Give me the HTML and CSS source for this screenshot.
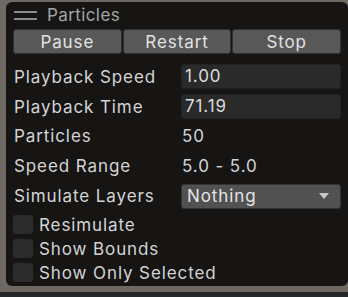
FILE: index.html
```html
<!DOCTYPE html>
<html lang="en">
<head>
    <meta charset="UTF-8">
    <title>Particles</title>
    <link rel="stylesheet" href="styles.css">
</head>
<body>
    <div class="panel">
        <div class="header">
            <span class="grip"></span>
            <span class="title">Particles</span>
        </div>
        <div class="buttons">
            <button>Pause</button>
            <button>Restart</button>
            <button>Stop</button>
        </div>

        <div class="row">
            <span class="label">Playback Speed</span>
            <div class="field">1.00</div>
        </div>
        <div class="row">
            <span class="label">Playback Time</span>
            <div class="field">71.19</div>
        </div>
        <div class="row">
            <span class="label">Particles</span>
            <span class="value">50</span>
        </div>
        <div class="row">
            <span class="label">Speed Range</span>
            <span class="value">5.0 - 5.0</span>
        </div>
        <div class="row">
            <span class="label">Simulate Layers</span>
            <div class="dropdown">Nothing <span class="arrow"></span></div>
        </div>

        <div class="checks">
            <label class="check"><span class="box"></span>Resimulate</label>
            <label class="check"><span class="box"></span>Show Bounds</label>
            <label class="check"><span class="box"></span>Show Only Selected</label>
        </div>
    </div>
    <div class="footer"></div>
</body>
</html>
```

FILE: styles.css
```css
body {
    margin: 0;
    background-color: #6f6964;
    font-family: 'Inter', sans-serif;
    font-size: 17px;
    letter-spacing: 0.9px;
    color: #d4d4d4;
    width: 348px;
    height: 297px;
    overflow: hidden;
}

.panel {
    margin: 2px 0 0 6px;
    width: 342px;
    height: 284px;
    box-sizing: border-box;
    background: #161514;
    border-radius: 6px;
    padding: 0 7px 0 7px;
}

.header {
    display: flex;
    align-items: center;
    height: 26px;
    padding-left: 1px;
}

.grip {
    width: 23px;
    height: 5px;
    border-top: 2px solid #8a8a8a;
    border-bottom: 2px solid #8a8a8a;
    margin-right: 10px;
}

.title {
    color: #a4a4a4;
    font-size: 17px;
    letter-spacing: 0.4px;
}

.buttons {
    display: flex;
    gap: 1px;
    margin: 1px 0 8px;
}

.buttons button {
    flex: 1;
    height: 25px;
    background: #585858;
    color: #e2e2e2;
    border: 1px solid #303030;
    border-radius: 3px;
    font-family: 'Inter', sans-serif;
    font-size: 17px;
    letter-spacing: 0.9px;
    padding: 0;
}

.row {
    display: flex;
    align-items: center;
    height: 29.8px;
}

.label {
    width: 167px;
    padding-left: 1px;
}

.field {
    flex: 1;
    height: 23px;
    line-height: 23px;
    background: #2a2a2a;
    border: 1px solid #212121;
    border-radius: 3px;
    padding-left: 3px;
    color: #dcdcdc;
}

.value {
    padding-left: 1px;
}

.dropdown {
    flex: 1;
    display: flex;
    justify-content: space-between;
    align-items: center;
    height: 23px;
    background: #515151;
    border: 1px solid #333;
    border-radius: 3px;
    padding: 0 11px 0 5px;
    color: #e4e4e4;
}

.arrow {
    width: 0;
    height: 0;
    border-left: 5px solid transparent;
    border-right: 5px solid transparent;
    border-top: 6px solid #c8c8c8;
}

.checks {
    padding-top: 2px;
}

.check {
    display: flex;
    align-items: center;
    height: 24px;
}

.box {
    width: 20px;
    height: 19px;
    background: #2c2c2c;
    border-radius: 3px;
    margin-right: 6px;
}

.footer {
    margin-top: 6px;
    height: 10px;
    background: #25272a;
}
```
